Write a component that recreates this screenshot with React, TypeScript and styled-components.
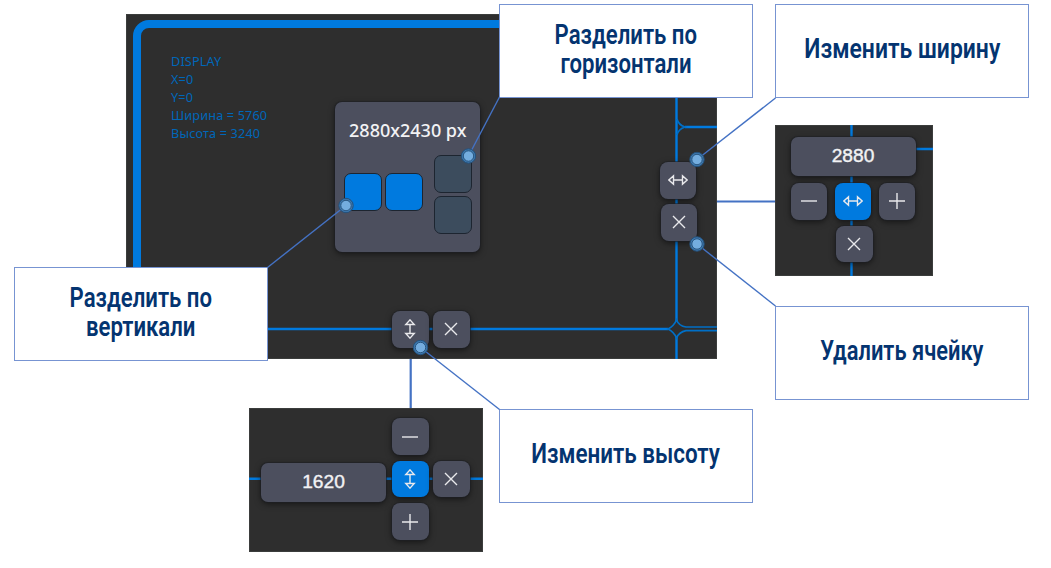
import React from "react"
import styled, { createGlobalStyle, css } from "styled-components"

const BLUE = "#007adf"
const DARK = "#2e2e2e"
const STEEL = "#4c4f5e"
const LINK = "#4472c4"

const GlobalStyle = createGlobalStyle`
  body {
    margin: 0;
    background: #fff;
  }

  * {
    box-sizing: border-box;
  }
`

const Canvas = styled.main`
  position: relative;
  width: 1051px;
  height: 568px;
  overflow: hidden;
  background: #fff;
  font-family: "Noto Sans", "Open Sans", sans-serif;
`

const Panel = styled.section<{ $x: number; $y: number; $w: number; $h: number }>`
  position: absolute;
  left: ${p => p.$x}px;
  top: ${p => p.$y}px;
  width: ${p => p.$w}px;
  height: ${p => p.$h}px;
  overflow: hidden;
  background: ${DARK};
  box-shadow: inset 0 0 0 1px #3b3d3c;
`

const DisplayFrame = styled.div`
  width: 640px;
  height: 380px;
  margin: 6px 0 0 7px;
  padding: 24px 30px;
  border: 8px solid ${BLUE};
  border-radius: 16px;
`

const DisplayInfo = styled.div`
  color: #0067b9;
  font-size: 12.7px;
  line-height: 18px;
  letter-spacing: 0.15px;
  white-space: nowrap;
`

const Lines = styled.svg`
  position: absolute;
  inset: 0;
  width: 100%;
  height: 100%;
  fill: none;
  stroke: ${BLUE};
  stroke-width: 2.4;
`

const raised = css`
  background: ${STEEL};
  box-shadow: 0 0 0 1px rgba(30, 31, 36, 0.55), 0 2px 6px rgba(0, 0, 0, 0.55);
`

const SizeCard = styled.div`
  ${raised}
  position: absolute;
  left: 209px;
  top: 88px;
  width: 144.5px;
  height: 150px;
  padding: 16px 7.5px 0 8.5px;
  border-radius: 7px;
`

const SizeText = styled.div`
  color: #f2f2f4;
  font-size: 18px;
  line-height: 25px;
  font-weight: 500;
  text-align: center;
  white-space: nowrap;
`

const SplitOptions = styled.div`
  display: flex;
  justify-content: space-between;
  align-items: flex-start;
  padding-top: 12px;
`

const Split = styled.div<{ $column?: boolean }>`
  display: flex;
  flex-direction: ${p => (p.$column ? "column" : "row")};
  gap: 3px;
  margin-top: ${p => (p.$column ? 0 : 18)}px;
`

const Cell = styled.div<{ $active?: boolean }>`
  width: 38px;
  height: 38px;
  border: 1px solid #1d2530;
  border-radius: 7px;
  background: ${p => (p.$active ? BLUE : "#3c4c5d")};
`

const Button = styled.button<{ $active?: boolean }>`
  ${raised}
  display: flex;
  flex: none;
  align-items: center;
  justify-content: center;
  width: 36.5px;
  height: 36.5px;
  padding: 0;
  border: 0;
  border-radius: 8px;
  color: #e9e9ec;
  ${p => p.$active && `background: ${BLUE};`}
`

const Value = styled.div`
  ${raised}
  flex: none;
  width: 125px;
  height: 38.5px;
  border-radius: 7px;
  color: #f2f2f4;
  font: 19.2px/38px "Liberation Sans", sans-serif;
  -webkit-text-stroke: 0.4px #f2f2f4;
  text-align: center;
`

const DividerControls = styled.div<{ $x: number; $y: number; $column?: boolean }>`
  position: absolute;
  left: ${p => p.$x}px;
  top: ${p => p.$y}px;
  display: flex;
  flex-direction: ${p => (p.$column ? "column" : "row")};
  gap: ${p => (p.$column ? 5.5 : 4.5)}px;

  & > :last-child {
    margin-left: ${p => (p.$column ? 1 : 0)}px;
  }
`

const WidthControls = styled.div`
  position: relative;
  display: flex;
  flex-direction: column;
  gap: 6px;
  padding: 12px 0 0 15.5px;
`

const WidthRow = styled.div`
  display: flex;
  gap: 7.5px;
  padding-top: 1.5px;
`

const DeleteRow = styled.div`
  padding-left: 45.5px;
`

const HeightControls = styled.div`
  position: relative;
  display: flex;
  align-items: center;
  gap: 6px;
  padding: 10px 0 0 12.5px;

  & > ${Value} {
    margin-top: 7px;
  }
`

const HeightColumn = styled.div`
  display: flex;
  flex-direction: column;
  gap: 6px;

  & + ${Button} {
    margin-left: -1.5px;
  }
`

const Links = styled.svg`
  position: absolute;
  inset: 0;
  width: 100%;
  height: 100%;
  fill: none;
  stroke: ${LINK};
  stroke-width: 1.4;
`

const Callout = styled.div<{ $x: number; $y: number }>`
  position: absolute;
  left: ${p => p.$x}px;
  top: ${p => p.$y}px;
  display: flex;
  flex-direction: column;
  align-items: center;
  justify-content: center;
  width: 254px;
  height: 94px;
  padding-bottom: 3px;
  border: 1px solid #7794d2;
  background: #fff;
  color: #043470;
  font: 600 27px/28.5px Roboto, sans-serif;
  white-space: nowrap;
`

const CalloutLine = styled.span<{ $squeeze: number }>`
  transform: scaleX(${p => p.$squeeze});
`

const Icon = styled.svg`
  width: 20px;
  height: 20px;
  fill: none;
  stroke: currentColor;
  stroke-width: 1.4;
`

const Arrows = ({ vertical }: { vertical?: boolean }) => (
  <Icon viewBox="0 0 20 20">
    <path
      transform={vertical ? "rotate(90 10 10)" : undefined}
      d="M5.5 10h9M5.5 5.8v8.4L.9 10zM14.5 5.8v8.4L19.1 10z"
    />
  </Icon>
)

const Cross = () => (
  <Icon viewBox="0 0 20 20">
    <path d="M4 4l12 12M16 4L4 16" />
  </Icon>
)

const Minus = () => (
  <Icon viewBox="0 0 20 20">
    <path d="M2 10h16" />
  </Icon>
)

const Plus = () => (
  <Icon viewBox="0 0 20 20">
    <path d="M2 10h16M10 2v16" />
  </Icon>
)

const info = ["DISPLAY", "X=0", "Y=0", "Ширина = 5760", "Высота = 3240"]

const callouts = [
  { x: 499, y: 4, squeeze: 0.82, lines: ["Разделить по", "горизонтали"] },
  { x: 775, y: 4, squeeze: 0.85, lines: ["Изменить ширину"] },
  { x: 13.5, y: 267, squeeze: 0.82, lines: ["Разделить по", "вертикали"] },
  { x: 775, y: 305.5, squeeze: 0.81, lines: ["Удалить ячейку"] },
  { x: 499, y: 408.5, squeeze: 0.83, lines: ["Изменить высоту"] },
]

// marker centre, then the callout corner it is tied to
const pins = [
  [468.5, 156, 499.5, 97],
  [346, 205.5, 267.5, 267.5],
  [697, 159.5, 775.5, 98],
  [697, 244, 775.5, 306],
  [420.5, 347.5, 499.5, 409.5],
]

const DisplayPanel = () => (
  <Panel $x={126} $y={14} $w={591} $h={345}>
    <DisplayFrame>
      <DisplayInfo>
        {info.map(line => <div key={line}>{line}</div>)}
      </DisplayInfo>
    </DisplayFrame>
    <Lines>
      <path d="M550.5 70V307M550.5 323V345M0 315H542M559 113H591" />
      <path
        strokeWidth="1.7"
        stroke="#006fc6"
        fill={DARK}
        d="M591 313H560Q553 312 550.5 306Q548 312 542 315Q548 318 550.5 324Q553 318 560 316.6H591"
      />
      <path strokeWidth="1.7" stroke="#006fc6" d="M551 105Q552.5 111 559 113Q552.5 115 551 121" />
    </Lines>
    <SizeCard>
      <SizeText>2880x2430 px</SizeText>
      <SplitOptions>
        <Split>
          <Cell $active />
          <Cell $active />
        </Split>
        <Split $column>
          <Cell />
          <Cell />
        </Split>
      </SplitOptions>
    </SizeCard>
    <DividerControls $x={533.5} $y={148} $column>
      <Button><Arrows /></Button>
      <Button><Cross /></Button>
    </DividerControls>
    <DividerControls $x={266.2} $y={297}>
      <Button><Arrows vertical /></Button>
      <Button><Cross /></Button>
    </DividerControls>
  </Panel>
)

const WidthPanel = () => (
  <Panel $x={775} $y={125} $w={158} $h={151}>
    <Lines>
      <path d="M76.5 0V151M76 24H158" />
    </Lines>
    <WidthControls>
      <Value>2880</Value>
      <WidthRow>
        <Button><Minus /></Button>
        <Button $active><Arrows /></Button>
        <Button><Plus /></Button>
      </WidthRow>
      <DeleteRow>
        <Button><Cross /></Button>
      </DeleteRow>
    </WidthControls>
  </Panel>
)

const HeightPanel = () => (
  <Panel $x={248.5} $y={408.3} $w={234} $h={144}>
    <Lines>
      <path d="M0 70.7H234" />
    </Lines>
    <HeightControls>
      <Value>1620</Value>
      <HeightColumn>
        <Button><Minus /></Button>
        <Button $active><Arrows vertical /></Button>
        <Button><Plus /></Button>
      </HeightColumn>
      <Button><Cross /></Button>
    </HeightControls>
  </Panel>
)

const App = () => (
  <Canvas>
    <GlobalStyle />
    <DisplayPanel />
    <WidthPanel />
    <HeightPanel />
    {callouts.map(({ x, y, squeeze, lines }) => (
      <Callout key={`${x}-${y}`} $x={x} $y={y}>
        {lines.map(line => <CalloutLine key={line} $squeeze={squeeze}>{line}</CalloutLine>)}
      </Callout>
    ))}
    <Links>
      <path strokeWidth="2.2" d="M717 201.5H775M410.7 359V408" />
      {pins.map(([cx, cy, x, y]) => (
        <g key={`${cx}-${cy}`}>
          <path d={`M${cx} ${cy}L${x} ${y}`} />
          <circle cx={cx} cy={cy} r="7.2" fill="#3c78ae" stroke="#25507a" strokeWidth="1" />
          <circle cx={cx} cy={cy} r="5.2" fill="#74addf" stroke="#254f78" strokeWidth="0.9" />
        </g>
      ))}
    </Links>
  </Canvas>
)

export default App
